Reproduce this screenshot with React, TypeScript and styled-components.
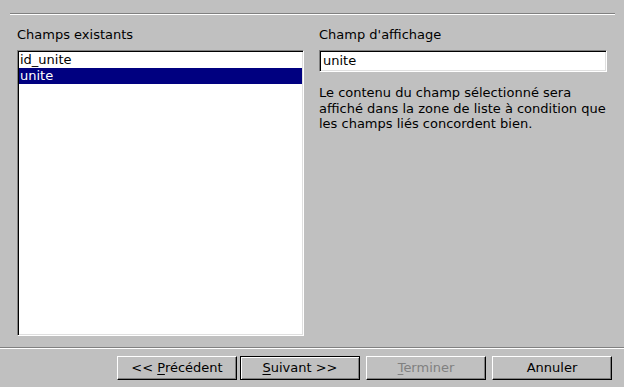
import styled, { createGlobalStyle } from "styled-components";

const GlobalStyle = createGlobalStyle`
  html, body {
    margin: 0;
    padding: 0;
    background: #c0c0c0;
  }
  body {
    font-family: "DejaVu Sans", "Liberation Sans", sans-serif;
    font-size: 13px;
    color: #000;
  }
`;

const Window = styled.div`
  width: 624px;
  height: 387px;
  background: #c0c0c0;
  display: flex;
  flex-direction: column;
  overflow: hidden;
`;

const Rule = styled.div<{ $inset?: boolean }>`
  height: 0;
  border-top: 1px solid #808080;
  border-bottom: 1px solid #ffffff;
  margin: ${(p) => (p.$inset ? "13px 9px 0 10px" : "0")};
`;

const Content = styled.div`
  flex: 1;
  display: grid;
  grid-template-columns: 287px 288px;
  column-gap: 15px;
  padding: 12px 17px 11px 17px;
`;

const Column = styled.div`
  display: flex;
  flex-direction: column;
  min-height: 0;
`;

const Label = styled.div`
  line-height: 16px;
  height: 16px;
  margin-bottom: 7px;
`;

const sunken = `
  background: #fff;
  border-style: solid;
  border-width: 1px;
  border-color: #808080 #fff #fff #808080;
  box-shadow: inset 1px 1px 0 #000, inset -1px -1px 0 #dfdfdf;
`;

const ListBox = styled.div`
  ${sunken}
  flex: 1;
  padding: 1px 1px;
  box-sizing: border-box;
`;

const ListItem = styled.div<{ $selected?: boolean }>`
  height: 16px;
  line-height: 16px;
  padding-left: 1px;
  background: ${(p) => (p.$selected ? "#000080" : "transparent")};
  color: ${(p) => (p.$selected ? "#fff" : "#000")};
`;

const TextField = styled.div`
  ${sunken}
  height: 22px;
  box-sizing: border-box;
  line-height: 20px;
  padding-left: 3px;
`;

const Hint = styled.p`
  margin: 13px 0 0 0;
  line-height: 15.5px;
`;

const ButtonRow = styled.div`
  display: flex;
  justify-content: flex-end;
  gap: 6px;
  padding: 7px 12px 7px 0;
`;

const Button = styled.button<{ $default?: boolean }>`
  width: 120px;
  height: 24px;
  box-sizing: border-box;
  margin: 0 0 0 ${(p) => (p.$default ? "-3px" : "0")};
  padding: 0;
  font: inherit;
  background: #c0c0c0;
  color: ${(p) => (p.disabled ? "#808080" : "#000")};
  border-style: solid;
  border-width: 1px;
  border-color: ${(p) =>
    p.$default ? "#000" : "#fff #000 #000 #fff"};
  box-shadow: ${(p) =>
    p.$default
      ? "inset 1px 1px 0 #fff, inset -1px -1px 0 #808080"
      : "inset -1px -1px 0 #808080"};
  text-align: center;
  line-height: 20px;
  cursor: default;

  u {
    text-decoration: underline;
    text-underline-offset: 2px;
  }
`;

export default function App() {
  return (
    <>
      <GlobalStyle />
      <Window>
        <Rule $inset />
        <Content>
          <Column>
            <Label>Champs existants</Label>
            <ListBox>
              <ListItem>id_unite</ListItem>
              <ListItem $selected>unite</ListItem>
            </ListBox>
          </Column>
          <Column>
            <Label>Champ d'affichage</Label>
            <TextField>unite</TextField>
            <Hint>
              Le contenu du champ sélectionné sera
              <br />
              affiché dans la zone de liste à condition que
              <br />
              les champs liés concordent bien.
            </Hint>
          </Column>
        </Content>
        <Rule />
        <ButtonRow>
          <Button>
            &lt;&lt; <u>P</u>récédent
          </Button>
          <Button $default>
            <u>S</u>uivant &gt;&gt;
          </Button>
          <Button disabled>
            <u>T</u>erminer
          </Button>
          <Button>Annuler</Button>
        </ButtonRow>
      </Window>
    </>
  );
}
